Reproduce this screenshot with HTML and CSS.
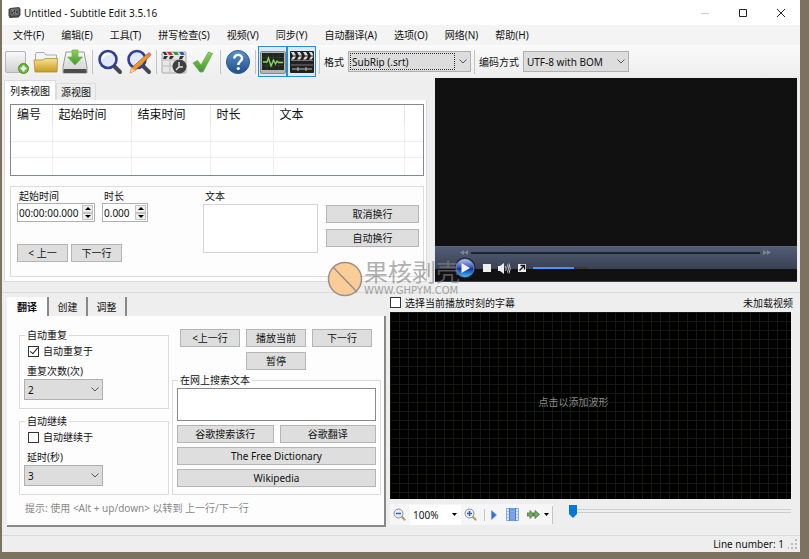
FILE: index.html
```html
<!DOCTYPE html>
<html lang="zh-CN">
<head>
<meta charset="utf-8">
<title>Untitled - Subtitle Edit 3.5.16</title>
<link rel="stylesheet" href="styles.css">
</head>
<body>

<div class="window">

  <header class="titlebar">
    <svg class="app-icon" width="13" height="13" viewBox="0 0 13 13">
      <path d="M2 2l9-1 1.500 2v6l-2 2.500-9 .5L.5 9.500v-6z" fill="#454545"/>
      <path d="M3 3.500l7-.5v5.500l-7 .5z" fill="#222" stroke="#aaa" stroke-width=".7"/>
      <path d="M6 4.500H4.500v1.500H6v1.500H4.500M8.800 4.500H7.300v3h1.500M7.300 6h1.200" fill="none" stroke="#ccc" stroke-width=".6"/>
    </svg>
    <h1 class="title">Untitled - Subtitle Edit 3.5.16</h1>
    <div class="window-buttons">
      <button class="window-button" aria-label="Minimize"><svg width="10" height="10" viewBox="0 0 10 10"><path d="M1 5.500h8" stroke="#ccc"/></svg></button>
      <button class="window-button" aria-label="Maximize"><svg width="10" height="10" viewBox="0 0 10 10"><path d="M1.500 1.500h7v7h-7z" fill="none" stroke="#222"/></svg></button>
      <button class="window-button" aria-label="Close"><svg width="10" height="10" viewBox="0 0 10 10"><path d="M1 1l8 8M9 1L1 9" stroke="#222"/></svg></button>
    </div>
  </header>

  <nav class="menu">
    <a href="#">文件(F)</a>
    <a href="#">编辑(E)</a>
    <a href="#">工具(T)</a>
    <a href="#">拼写检查(S)</a>
    <a href="#">视频(V)</a>
    <a href="#">同步(Y)</a>
    <a href="#">自动翻译(A)</a>
    <a href="#">选项(O)</a>
    <a href="#">网络(N)</a>
    <a href="#">帮助(H)</a>
  </nav>

  <div class="toolbar">
    <button class="tool" aria-label="New">
      <svg width="26" height="26" viewBox="0 0 26 26">
        <defs>
          <linearGradient id="paper" x2="0" y2="1"><stop stop-color="#fafafa"/><stop offset="1" stop-color="#cfcfcf"/></linearGradient>
          <linearGradient id="gold" x2="0" y2="1"><stop stop-color="#f7e291"/><stop offset="1" stop-color="#c99b1c"/></linearGradient>
          <linearGradient id="green" x2="0" y2="1"><stop stop-color="#8fd05c"/><stop offset="1" stop-color="#3f9a2c"/></linearGradient>
          <linearGradient id="blue" x2="0" y2="1"><stop stop-color="#5e92c9"/><stop offset="1" stop-color="#1f4f8c"/></linearGradient>
        </defs>
        <rect x="1.500" y="2.500" width="20" height="21" rx="1.500" fill="url(#paper)" stroke="#b5b5b5"/>
        <circle cx="19.500" cy="19.500" r="5" fill="#6cb63f" stroke="#4a8f2a"/>
        <path d="M19.500 16.500v6M16.500 19.500h6" stroke="#fff" stroke-width="2"/>
      </svg>
    </button>
    <button class="tool" aria-label="Open">
      <svg width="26" height="26" viewBox="0 0 26 26">
        <path d="M2.500 14V5l1-1.500H11L13 6h10.500v8z" fill="#f4f4f4" stroke="#aaa"/>
        <path d="M1 11h9l2-1.500h12.500L24 23H2z" fill="url(#gold)" stroke="#b58d28" stroke-width=".8"/>
      </svg>
    </button>
    <button class="tool" aria-label="Save">
      <svg width="26" height="26" viewBox="0 0 26 26">
        <path d="M4 3h18l3 15v6H1v-6z" fill="url(#paper)" stroke="#999"/>
        <rect x="1.500" y="20" width="23" height="4" rx="1" fill="#4c4c4c"/>
        <ellipse cx="13" cy="14" rx="8" ry="4" fill="#ddd"/>
        <path d="M10 1h6v7h4.500L13 16 5.500 8H10z" fill="url(#green)" stroke="#6eb249" stroke-width=".7"/>
      </svg>
    </button>
    <span class="separator"></span>
    <button class="tool" aria-label="Find">
      <svg width="26" height="26" viewBox="0 0 26 26">
        <path d="M17 17l6 6" stroke="#44474f" stroke-width="4" stroke-linecap="round"/>
        <circle cx="11" cy="10.500" r="8.500" fill="#dfe9fb" stroke="#303f90" stroke-width="2.600"/>
        <path d="M5.500 10a5.500 5.500 0 0 1 8-4.500" fill="none" stroke="#fff" stroke-width="2"/>
      </svg>
    </button>
    <button class="tool" aria-label="Replace">
      <svg width="26" height="26" viewBox="0 0 26 26">
        <path d="M17 17l6 6" stroke="#44474f" stroke-width="4" stroke-linecap="round"/>
        <circle cx="11" cy="10.500" r="8.500" fill="#dfe9fb" stroke="#303f90" stroke-width="2.600"/>
        <path d="M21 5l2.500 2.500L9 21.500l-5 2.500 1.500-5z" fill="#ef962c" stroke="#a9611e" stroke-width=".7"/>
        <path d="M20.500 5.500L23 3l2.500 2.500-2 2.500z" fill="#e66f70"/>
        <path d="M5.500 19L9 21.500l-5 2.500z" fill="#f3d3a4"/>
      </svg>
    </button>
    <span class="separator"></span>
    <button class="tool" aria-label="Visual sync">
      <svg width="26" height="26" viewBox="0 0 26 26">
        <rect x="1" y="3" width="24" height="21" rx="1" fill="#e7e7e7" stroke="#aaa"/>
        <path d="M2 11h20M2 17h20M9 11v12M16 11v12" stroke="#bbb"/>
        <path d="M1.500 3h3l2 3h-3z" fill="#333"/>
        <path d="M6 3h4l2 3H8z" fill="#c33"/><path d="M12 3h4l2 3h-4z" fill="#38933b"/><path d="M18 3h4l2 3h-4z" fill="#3457b4"/>
        <path d="M3 7h4l-2 3H2zM9 7h4l-2 3H8zM19 7h4l-2 3h-3z" fill="#333"/>
        <circle cx="18.500" cy="17.500" r="7" fill="#404040"/>
        <path d="M18 13v5h4M18 18l-3 3" fill="none" stroke="#ddd" stroke-width="1.500"/>
      </svg>
    </button>
    <button class="tool" aria-label="Spell check">
      <svg width="26" height="26" viewBox="0 0 26 26">
        <path d="M3 14l4.500-2.500L11 16l7.500-13 4 1.500L13 23h-3z" fill="url(#green)" stroke="#66a852" stroke-width=".8"/>
      </svg>
    </button>
    <span class="separator"></span>
    <button class="tool" aria-label="Help">
      <svg width="26" height="26" viewBox="0 0 26 26">
        <circle cx="13" cy="13" r="11.500" fill="url(#blue)" stroke="#2b5c95"/>
        <path d="M9.300 9.500c0-5 8-4.600 7.700 0-.2 3-3.700 3-3.700 6.500" fill="none" stroke="#fff" stroke-width="2.400"/>
        <circle cx="13.300" cy="19.500" r="1.600" fill="#fff"/>
      </svg>
    </button>
    <span class="separator"></span>
    <button class="tool pressed" aria-label="Show waveform">
      <svg width="26" height="26" viewBox="0 0 26 26">
        <rect x=".5" y="2.500" width="25" height="22" rx="1.500" fill="#b4b4b4" stroke="#888"/>
        <rect x="2" y="4" width="22" height="17" fill="#20271f"/>
        <path d="M2 8.500h22M2 12.500h22M2 16.500h22M7 4v17M13 4v17M19 4v17" stroke="#3b453a" stroke-width=".5"/>
        <path d="M3 13h4l1.500-4 2.500 8 2.500-6 2 4 1.500-3 1.500 1.500H23" fill="none" stroke="#91d65e" stroke-width="1.300"/>
      </svg>
    </button>
    <button class="tool pressed" aria-label="Show video">
      <svg width="26" height="26" viewBox="0 0 26 26">
        <rect x="1" y="2" width="24" height="22" rx="1" fill="#202020"/>
        <path d="M2 3h3l2 3.500H4zM8 3h3l2 3.500h-3zM14 3h3l2 3.500h-3zM20 3h3l1.500 3.500H22zM4 7.500h3L5 10.500H2zM10 7.500h3l-2 3H8zM16 7.500h3l-2 3h-3zM22 7.500h2.500l-2 3H20z" fill="#ddd"/>
        <path d="M2 11.500h22M2 16h22" stroke="#777"/>
        <path d="M3 20h20M9 18v4M17 18v4" stroke="#bbb"/>
      </svg>
    </button>
    <span class="separator"></span>
    <label class="toolbar-label" for="format">格式</label>
    <div class="dropdown dropdown-format">
      <select id="format"><option>SubRip (.srt)</option></select>
      <span class="focus-mark"></span>
      <svg class="chevron" width="8" height="5" viewBox="0 0 8 5"><path d="M.5.5L4 4 7.500.5" fill="none" stroke="#555"/></svg>
    </div>
    <span class="separator"></span>
    <label class="toolbar-label" for="encoding">编码方式</label>
    <div class="dropdown dropdown-encoding">
      <select id="encoding"><option>UTF-8 with BOM</option></select>
      <svg class="chevron" width="8" height="5" viewBox="0 0 8 5"><path d="M.5.5L4 4 7.500.5" fill="none" stroke="#555"/></svg>
    </div>
  </div>

  <div class="upper">
    <section class="list-section">
      <div class="list-tabs">
        <button class="list-tab active">列表视图</button>
        <button class="list-tab">源视图</button>
      </div>
      <div class="list-panel">
        <div class="list-box">
          <table class="list-view">
            <colgroup><col class="col-number"><col class="col-time"><col class="col-time"><col class="col-duration"><col class="col-text"><col></colgroup>
            <thead>
              <tr><th>编号</th><th>起始时间</th><th>结束时间</th><th>时长</th><th>文本</th><th></th></tr>
            </thead>
            <tbody>
              <tr><td></td><td></td><td></td><td></td><td></td><td></td></tr>
              <tr><td></td><td></td><td></td><td></td><td></td><td></td></tr>
              <tr><td></td><td></td><td></td><td></td><td></td><td></td></tr>
            </tbody>
          </table>
        </div>

        <div class="edit-box">
          <div class="edit-times">
            <div class="time-fields">
              <div class="field">
                <label for="start-time">起始时间</label>
                <div class="spinner spinner-start">
                  <input id="start-time" type="text" value="00:00:00.000">
                  <span class="spinner-buttons">
                    <button aria-label="Up"><svg width="6" height="3" viewBox="0 0 6 3"><path d="M0 3l3-3 3 3z"/></svg></button>
                    <button aria-label="Down"><svg width="6" height="3" viewBox="0 0 6 3"><path d="M0 0l3 3 3-3z"/></svg></button>
                  </span>
                </div>
              </div>
              <div class="field">
                <label for="duration">时长</label>
                <div class="spinner spinner-duration">
                  <input id="duration" type="text" value="0.000">
                  <span class="spinner-buttons">
                    <button aria-label="Up"><svg width="6" height="3" viewBox="0 0 6 3"><path d="M0 3l3-3 3 3z"/></svg></button>
                    <button aria-label="Down"><svg width="6" height="3" viewBox="0 0 6 3"><path d="M0 0l3 3 3-3z"/></svg></button>
                  </span>
                </div>
              </div>
            </div>
            <div class="step-buttons">
              <button class="button">&lt; 上一</button>
              <button class="button">下一行</button>
            </div>
          </div>
          <div class="field edit-text">
            <label for="subtitle-text">文本</label>
            <textarea id="subtitle-text"></textarea>
          </div>
          <div class="break-buttons">
            <button class="button">取消换行</button>
            <button class="button">自动换行</button>
          </div>
        </div>
      </div>
    </section>

    <section class="player">
      <div class="player-controls">
        <div class="seek-row">
          <svg width="8" height="5" viewBox="0 0 8 5"><path d="M4 0v5L0 2.500zM8 0v5L4 2.500z" fill="#7c8498"/></svg>
          <input class="seek" type="range" value="0" aria-label="Position">
          <svg width="8" height="5" viewBox="0 0 8 5"><path d="M0 0v5l4-2.500zM4 0v5l4-2.500z" fill="#7c8498"/></svg>
        </div>
        <div class="play-row">
          <button class="player-button" aria-label="Play">
            <svg width="22" height="22" viewBox="0 0 22 22">
              <defs><linearGradient id="orb" x2="0" y2="1"><stop stop-color="#b9c6f3"/><stop offset=".45" stop-color="#3d58bd"/><stop offset=".55" stop-color="#1233a0"/><stop offset="1" stop-color="#38c2ff"/></linearGradient></defs>
              <circle cx="11" cy="11" r="10.500" fill="#1b2136"/>
              <circle cx="11" cy="11" r="9" fill="url(#orb)" stroke="#8190c4" stroke-width=".7"/>
              <path d="M7.500 6l8.500 5-8.500 5z" fill="#f2f2f2"/>
            </svg>
          </button>
          <button class="player-button" aria-label="Stop"><svg width="8" height="8" viewBox="0 0 8 8"><path d="M0 0h8v8H0z" fill="#eee"/></svg></button>
          <button class="player-button" aria-label="Mute">
            <svg width="13" height="11" viewBox="0 0 13 11"><path d="M0 3h2l4-3v11L2 8H0z" fill="#eee"/><path d="M7.500 3q1.500 2.500 0 5M9.500 1.500q2 4 0 8M11 .5q2.500 5 0 10" fill="none" stroke="#ccc"/></svg>
          </button>
          <button class="player-button" aria-label="Fullscreen">
            <svg width="8" height="8" viewBox="0 0 8 8"><path d="M0 0h8v8H0z" fill="#eee"/><path d="M1.500 6.500L6 2M2.500 1.500h4v4" fill="none" stroke="#111" stroke-width="1.300"/></svg>
          </button>
          <input class="volume" type="range" value="75" aria-label="Volume">
        </div>
      </div>
    </section>
  </div>

  <div class="lower">
    <section class="tools-section">
      <div class="tools-tabs">
        <button class="tools-tab active">翻译</button>
        <button class="tools-tab">创建</button>
        <button class="tools-tab">调整</button>
      </div>
      <div class="tools-panel">
        <div class="tools-columns">
          <div class="auto-column">
            <fieldset class="group auto-group">
              <legend>自动重复</legend>
              <label class="check"><input type="checkbox" checked>自动重复于</label>
              <label class="select-label" for="repeat-count">重复次数(次)</label>
              <div class="dropdown">
                <select id="repeat-count"><option>2</option></select>
                <svg class="chevron" width="8" height="5" viewBox="0 0 8 5"><path d="M.5.5L4 4 7.500.5" fill="none" stroke="#555"/></svg>
              </div>
            </fieldset>
            <fieldset class="group auto-group">
              <legend>自动继续</legend>
              <label class="check"><input type="checkbox">自动继续于</label>
              <label class="select-label" for="delay">延时(秒)</label>
              <div class="dropdown">
                <select id="delay"><option>3</option></select>
                <svg class="chevron" width="8" height="5" viewBox="0 0 8 5"><path d="M.5.5L4 4 7.500.5" fill="none" stroke="#555"/></svg>
              </div>
            </fieldset>
          </div>
          <div class="search-column">
            <div class="play-buttons">
              <button class="button">&lt;上一行</button>
              <button class="button">播放当前</button>
              <button class="button">下一行</button>
              <button class="button pause">暂停</button>
            </div>
            <fieldset class="group search-group">
              <legend>在网上搜索文本</legend>
              <textarea class="search-text" aria-label="在网上搜索文本"></textarea>
              <div class="search-buttons">
                <button class="button">谷歌搜索该行</button>
                <button class="button">谷歌翻译</button>
                <button class="button wide">The Free Dictionary</button>
                <button class="button wide">Wikipedia</button>
              </div>
            </fieldset>
          </div>
        </div>
        <p class="hint">提示: 使用 &lt;Alt + up/down&gt; 以转到 上一行/下一行</p>
      </div>
    </section>

    <section class="wave-section">
      <div class="wave-header">
        <label class="check"><input type="checkbox">选择当前播放时刻的字幕</label>
        <span>未加载视频</span>
      </div>
      <div class="waveform">点击以添加波形</div>
      <div class="wave-footer">
        <div class="wave-tools">
          <button class="wave-tool" aria-label="Zoom out">
            <svg width="13" height="13" viewBox="0 0 13 13"><path d="M8.500 8.500l3 3" stroke="#c09a54" stroke-width="2.200" stroke-linecap="round"/><circle cx="5.500" cy="5.500" r="4.500" fill="#e4edf8" stroke="#8391a5"/><path d="M3 5.500h5" stroke="#3c62a8" stroke-width="1.500"/></svg>
          </button>
          <div class="zoom-box">
            <select aria-label="Zoom"><option>100%</option></select>
            <svg class="arrow" width="5" height="3" viewBox="0 0 5 3"><path d="M0 0h5L2.500 3z"/></svg>
          </div>
          <button class="wave-tool" aria-label="Zoom in">
            <svg width="13" height="13" viewBox="0 0 13 13"><path d="M8.500 8.500l3 3" stroke="#c09a54" stroke-width="2.200" stroke-linecap="round"/><circle cx="5.500" cy="5.500" r="4.500" fill="#e4edf8" stroke="#8391a5"/><path d="M3 5.500h5M5.500 3v5" stroke="#3c62a8" stroke-width="1.500"/></svg>
          </button>
          <span class="wave-separator"></span>
          <button class="wave-tool" aria-label="Play">
            <svg width="6" height="10" viewBox="0 0 6 10"><path d="M.5.5L5.500 5l-5 4.500z" fill="#2f6be4" stroke="#5d8cec" stroke-width=".6"/></svg>
          </button>
          <button class="wave-tool wave-center" aria-label="Center">
            <svg width="13" height="13" viewBox="0 0 13 13"><path d="M.5.5h12v12H.5z" fill="#dbe8fc" stroke="#86a7dc"/><path d="M4 0h5v13H4z" fill="#6f9df0"/><path d="M1 3.500h11M1 6.500h11M1 9.500h11" stroke="#92b2e6" stroke-width=".7"/><path d="M3.500 0v13M9.500 0v13" stroke="#3e63b0" stroke-width=".8"/></svg>
          </button>
          <button class="wave-tool" aria-label="Playback rate">
            <svg width="13" height="9" viewBox="0 0 13 9"><path d="M0 3h3V.5l4 4-4 4V6H0zM6 3h2V.5l4.500 4-4.500 4V6H6z" fill="#6eae58" stroke="#42643a" stroke-width=".7"/></svg>
            <svg width="5" height="3" viewBox="0 0 5 3"><path d="M0 0h5L2.500 3z"/></svg>
          </button>
          <span class="wave-separator wave-end"></span>
        </div>
        <input class="position" type="range" value="0" aria-label="Video position">
      </div>
    </section>
  </div>

  <footer class="status">
    <span>Line number: 1</span>
    <svg width="10" height="10" viewBox="0 0 10 10"><path d="M7 0h2v2H7zM7 4h2v2H7zM3 4h2v2H3zM7 8h2v2H7zM3 8h2v2H3zM0 8h1v2H0z" fill="#bbb"/></svg>
  </footer>

  <div class="watermark">
    <svg width="36" height="36" viewBox="0 0 36 36"><circle cx="18" cy="18" r="16.500" fill="#fbc98f" stroke="#92867b" stroke-width="1.500"/><path d="M6 6l24 25" stroke="#92867b" stroke-width="1.500"/></svg>
    <div>
      <div class="watermark-name">果核剥壳</div>
      <div class="watermark-site">WWW.GHPYM.COM</div>
    </div>
  </div>

</div>

</body>
</html>
```

FILE: styles.css
```css
* {
  box-sizing: border-box;
}

body {
  margin: 0;
  background: #7d725f;
  font: 10px/12px "Noto Sans", "Noto Sans CJK SC", sans-serif;
  color: #111;
}

button, input, select, textarea {
  margin: 0;
  padding: 0;
  font: inherit;
  color: inherit;
}

button {
  display: flex;
  align-items: center;
  justify-content: center;
  border: 0;
  background: none;
}

svg {
  display: block;
  flex: none;
}

.window {
  position: relative;
  margin: 0 9px 7px 2px;
  background: #eee;
}

/* Title bar */
.titlebar {
  display: flex;
  align-items: center;
  height: 25px;
  padding-left: 6px;
  background: #fff;
}

.title {
  flex: 1;
  margin: 0 0 0 3px;
  font-size: 10px;
  font-weight: normal;
}

.window-buttons {
  display: flex;
}

.window-button {
  width: 38px;
  height: 25px;
}

/* Menu */
.menu {
  display: flex;
  align-items: center;
  gap: 17px;
  height: 20px;
  padding: 0 11px;
  background: #f4f4f4;
}

.menu a {
  color: inherit;
  text-decoration: none;
  white-space: nowrap;
}

/* Toolbar */
.toolbar {
  display: flex;
  align-items: center;
  height: 33px;
  background: linear-gradient(#fafafa, #eee);
}

.tool {
  width: 29px;
  height: 31px;
}

.pressed {
  border: 1px solid #2a8ad4;
  background: #d9eafa;
}

.separator {
  width: 1px;
  height: 24px;
  margin: 0 2px 0 3px;
  background: #c4c4c4;
}

.toolbar-label {
  margin: 0 4px 0 2px;
  white-space: nowrap;
}

/* Drop-downs: the arrow shares the grid cell with the select */
.dropdown, .zoom-box {
  display: grid;
  align-items: center;
}

.dropdown > *, .zoom-box > * {
  grid-area: 1 / 1;
}

.dropdown {
  width: 79px;
}

.dropdown select {
  width: 100%;
  height: 21px;
  padding-left: 3px;
  appearance: none;
  border: 1px solid #b0b0b0;
  border-radius: 0;
  background: #ddd;
}

.chevron {
  justify-self: end;
  margin-right: 4px;
  pointer-events: none;
}

.dropdown-format {
  width: 123px;
}

.dropdown-encoding {
  width: 106px;
}

.focus-mark {
  height: 17px;
  margin: 0 16px 0 2px;
  border: 1px dotted #333;
  pointer-events: none;
}

/* Upper half */
.upper {
  display: grid;
  grid-template-columns: 425px 1fr;
  gap: 8px;
  padding-right: 3px;
}

.list-section {
  padding: 2px 0 0 2px;
}

.list-tabs {
  display: flex;
  align-items: flex-end;
  height: 20px;
}

.list-tab {
  height: 17px;
  padding: 0 4px;
  border: 1px solid #dcdcdc;
  border-bottom: 0;
}

.list-tab.active {
  height: 20px;
  padding: 0 5px;
  background: #fdfdfd;
}

.list-panel {
  padding: 4px 2px 4px 5px;
  border: 1px solid #dcdcdc;
  border-top: 0;
  background: #fdfdfd;
}

.list-box {
  border: 1px solid #828790;
  background: #fff;
}

.list-view {
  width: 100%;
  table-layout: fixed;
  border-collapse: collapse;
}

.list-view th {
  height: 20px;
  padding: 0 6px;
  border-right: 1px solid #e5e5e5;
  font-size: 12px;
  font-weight: normal;
  line-height: 16px;
  text-align: left;
}

.list-view td {
  height: 16px;
  padding: 0;
  border-right: 1px solid #eee;
  border-bottom: 1px solid #eee;
}

.list-view th:last-child, .list-view td:last-child {
  border-right: 0;
}

.list-view tr:last-child td {
  height: 18px;
  border-bottom: 0;
}

.col-number { width: 41px; }
.col-time { width: 79px; }
.col-duration { width: 63px; }
.col-text { width: 131px; }

.edit-box {
  display: flex;
  height: 91px;
  margin-top: 10px;
  padding: 3px 4px 0 6px;
  border: 1px solid #dcdcdc;
}

.edit-times {
  width: 186px;
}

.time-fields {
  display: flex;
  gap: 7px;
}

.field label {
  display: block;
  padding-left: 2px;
}

.spinner {
  display: flex;
  height: 19px;
  margin-top: 1px;
  border: 1px solid #b0b0b0;
  background: #fff;
}

.spinner-start { width: 78px; }
.spinner-duration { width: 46px; }

.spinner input {
  flex: 1;
  min-width: 0;
  padding-left: 1px;
  border: 0;
  background: none;
}

.spinner-buttons {
  display: grid;
  width: 12px;
  padding: 1px 1px 1px 0;
}

.spinner-buttons button {
  border: 1px solid #c4c4c4;
  background: #eee;
}

.button {
  height: 18px;
  border: 1px solid #b5b5b5;
  background: #dedede;
  white-space: nowrap;
}

.step-buttons {
  display: flex;
  gap: 3px;
  margin-top: 22px;
}

.step-buttons .button {
  width: 51px;
}

.edit-text {
  width: 115px;
}

textarea {
  display: block;
  width: 100%;
  border: 1px solid #d4d4d4;
  background: #fff;
  resize: none;
}

.edit-text textarea {
  height: 49px;
  margin-top: 2px;
}

.break-buttons {
  display: grid;
  flex: 1;
  align-content: start;
  gap: 6px;
  padding: 15px 0 0 8px;
}

/* Video player */
.player {
  display: flex;
  flex-direction: column;
  justify-content: flex-end;
  background: #111;
}

.player-controls {
  height: 36px;
  padding: 3px 26px 0 19px;
  border-top: 1px solid #5b657d;
  border-bottom: 1px solid #34405e;
  background: linear-gradient(#525c75, #394152 22px, #111 22px);
}

.seek-row {
  display: flex;
  align-items: center;
  gap: 3px;
  padding-left: 6px;
}

.seek, .volume {
  height: 5px;
  appearance: none;
  background: none;
}

.seek {
  flex: 1;
  min-width: 0;
}

.seek::-webkit-slider-runnable-track {
  height: 2px;
  background: #20242f;
}

.volume {
  width: 55px;
}

.volume::-webkit-slider-runnable-track {
  height: 2px;
  background: linear-gradient(to right, #4c92ff 75%, #3a3a3a 75%);
}

.seek::-webkit-slider-thumb, .volume::-webkit-slider-thumb {
  width: 0;
  appearance: none;
}

.play-row {
  display: flex;
  align-items: center;
  gap: 7px;
  margin-top: 2px;
}

/* Lower half */
.lower {
  display: grid;
  grid-template-columns: 379px 1fr;
  gap: 4px;
  margin-top: 10px;
  padding: 4px 9px 8px 5px;
  border-top: 1px solid #dcdcdc;
}

.tools-tabs {
  display: flex;
  height: 19px;
}

.tools-tab {
  width: 39px;
  border-right: 2px solid #888;
}

.tools-tab.active {
  width: 42px;
  background: #fdfdfd;
  font-weight: bold;
}

.tools-panel {
  padding: 13px 3px 11px 12px;
  border-right: 2px solid #888;
  border-bottom: 2px solid #888;
  background: #fdfdfd;
}

.tools-columns {
  display: grid;
  grid-template-columns: 150px 1fr;
  gap: 3px;
}

.group {
  min-width: 0;
  margin: 0;
  padding: 0 4px;
  border: 1px solid #dcdcdc;
}

.group legend {
  height: 12px;
  margin-left: 1px;
  padding: 0 2px;
}

.auto-column {
  display: grid;
  gap: 6px;
  align-content: start;
}

.auto-group {
  height: 80px;
}

.check {
  display: flex;
  align-items: center;
  gap: 4px;
}

.auto-group .check {
  margin: 4px 0 8px 4px;
}

.check input {
  display: grid;
  place-content: center;
  width: 11px;
  height: 11px;
  appearance: none;
  border: 1px solid #333;
  background: #fff;
}

.check input:checked::after {
  content: "";
  width: 3px;
  height: 7px;
  margin-bottom: 2px;
  border: solid #222;
  border-width: 0 1px 1px 0;
  transform: rotate(40deg);
}

.select-label {
  display: block;
  margin: 0 0 2px 3px;
}

.play-buttons {
  display: grid;
  grid-template-columns: repeat(3, 60px);
  gap: 5px 6px;
  padding-left: 8px;
}

.pause {
  grid-column: 2;
}

.search-group {
  height: 121px;
  margin-top: 4px;
}

.search-text {
  height: 33px;
  margin-top: 2px;
  border-color: #888;
}

.search-buttons {
  display: grid;
  grid-template-columns: 1fr 1fr;
  gap: 4px 6px;
  margin-top: 4px;
}

.wide {
  grid-column: 1 / 3;
}

.hint {
  margin: 7px 0 0 6px;
  color: #888;
}

/* Waveform */
.wave-section {
  display: flex;
  flex-direction: column;
}

.wave-header {
  display: flex;
  align-items: center;
  justify-content: space-between;
  height: 11px;
  margin-right: -2px;
}

.waveform {
  display: grid;
  flex: 1;
  place-items: center;
  margin-top: 4px;
  padding: 0 34px 8px 0;
  background:
    repeating-linear-gradient(to right, #151812 0 1px, transparent 1px 9px),
    repeating-linear-gradient(#151812 0 1px, #000 1px 9px);
  color: #888;
}

.wave-footer {
  display: flex;
  height: 28px;
}

.wave-tools {
  display: flex;
  align-items: center;
  height: 21px;
  margin-top: 5px;
  background: #f6f6f6;
}

.wave-tool {
  gap: 4px;
  padding: 0 3px;
}

.wave-center {
  padding: 0 5px 0 6px;
}

.zoom-box {
  width: 51px;
  margin-left: 1px;
  background: #fff;
}

.zoom-box select {
  width: 100%;
  height: 20px;
  padding-left: 3px;
  appearance: none;
  border: 0;
  background: none;
}

.arrow {
  justify-self: end;
  margin-right: 4px;
  pointer-events: none;
}

.wave-separator {
  width: 1px;
  height: 12px;
  margin: 0 3px 0 4px;
  background: #c4c4c4;
}

.wave-end {
  height: 18px;
  margin: 0;
}

.position {
  flex: 1;
  height: 15px;
  margin: 5px 0 0 16px;
  appearance: none;
  background: linear-gradient(#ccc, #ccc) 0 5px / 100% 1px no-repeat, linear-gradient(#ccc, #ccc) 0 8px / 100% 1px no-repeat;
}

.position::-webkit-slider-thumb {
  width: 8px;
  height: 13px;
  appearance: none;
  background: #0078d7;
  clip-path: polygon(0 0, 100% 0, 100% 70%, 50% 100%, 0 70%);
}

/* Status bar */
.status {
  display: flex;
  align-items: center;
  justify-content: flex-end;
  gap: 4px;
  height: 17px;
  padding-right: 2px;
  border-top: 1px solid #dcdcdc;
}

/* Watermark lies over the splitter */
.watermark {
  position: absolute;
  top: 261px;
  left: 325px;
  display: flex;
  align-items: flex-start;
  gap: 1px;
  opacity: .9;
  pointer-events: none;
}

.watermark-name {
  font-size: 24px;
  line-height: 22px;
  color: rgba(130, 130, 130, .7);
}

.watermark-site {
  margin-top: 3px;
  font-family: "DejaVu Sans", sans-serif;
  font-size: 10px;
  line-height: 10px;
  color: #999;
}
```
